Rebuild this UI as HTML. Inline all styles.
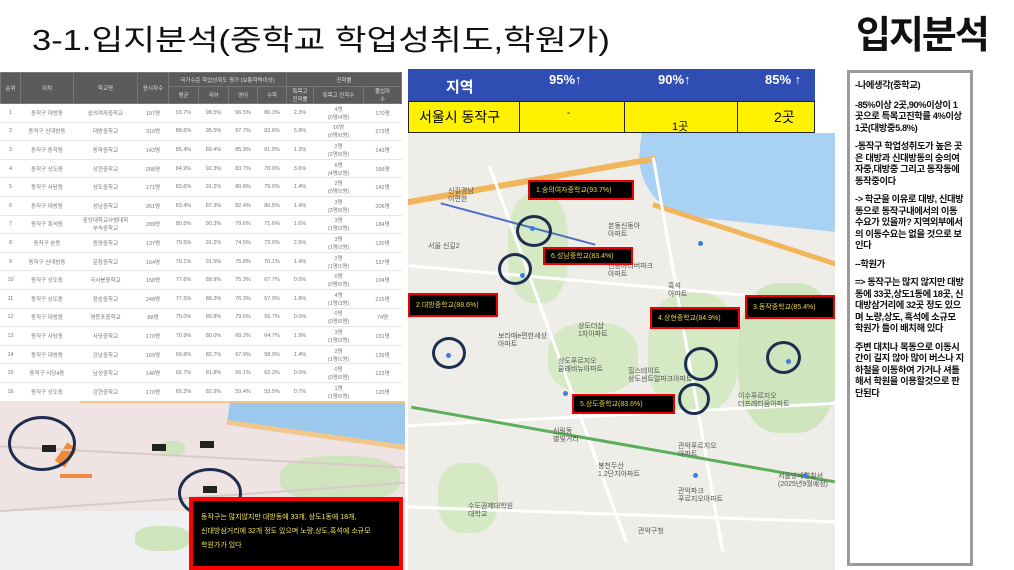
<!DOCTYPE html>
<html><head><meta charset="utf-8"><style>
*{margin:0;padding:0;box-sizing:border-box}
body{width:1014px;height:570px;background:#fff;position:relative;overflow:hidden;font-family:"Liberation Sans","Noto Sans CJK KR",sans-serif}
.abs{position:absolute}
table.t{position:absolute;left:0;top:72px;width:401px;border-collapse:collapse;font-size:5.5px;color:#777;text-align:center;table-layout:fixed}
table.t td{height:18.6px;border-bottom:1px solid #e6e6e6;white-space:nowrap;overflow:hidden}
table.t th{background:#5b5b5b;color:#ddd;font-weight:normal;border:1px solid #777;font-size:5.5px}
.lbl{position:absolute;background:#000;border:2px solid #e00;color:#e8d44a;font-size:7px;padding-left:6px;display:flex;align-items:center}
.cir{position:absolute;border:3px solid #1d2e4f;border-radius:50%}
.g{position:absolute;background:#cfe3bd;border-radius:40%}
.pin{position:absolute;width:5px;height:5px;border-radius:50%;background:#3b7de0}
.m{position:absolute;font-size:7px;color:#555;line-height:8px}
.rd{position:absolute;background:#fff;height:3px}
</style></head><body>
<div class="abs" style="left:32px;top:17px;font-size:29px;color:#111;transform:scaleX(1.19);transform-origin:left top;white-space:nowrap">3-1.입지분석(중학교 학업성취도,학원가)</div>
<div class="abs" style="left:856px;top:4px;font-size:38px;font-weight:bold;color:#111;letter-spacing:-2px">입지분석</div>

<table class="t">
<colgroup><col style="width:20px"><col style="width:53px"><col style="width:64px"><col style="width:31px"><col style="width:30px"><col style="width:30px"><col style="width:29px"><col style="width:29px"><col style="width:27px"><col style="width:50px"><col style="width:38px"></colgroup>
<tr style="height:14px"><th rowspan="2">순위</th><th rowspan="2">위치</th><th rowspan="2">학교명</th><th rowspan="2">응시자수</th><th colspan="4">국가수준 학업성취도 평가 (보통학력이상)</th><th colspan="3">진학률</th></tr>
<tr style="height:15px"><th>평균</th><th>국어</th><th>영어</th><th>수학</th><th>특목고<br>진학률</th><th>특목고 진학수</th><th>졸업자<br>수</th></tr>
<tr><td>1</td><td>동작구 대방동</td><td>숭의여자중학교</td><td>197명</td><td>93.7%</td><td>98.5%</td><td>96.5%</td><td>86.3%</td><td>2.3%</td><td>4명<br>(0명/4명)</td><td>170명</td></tr>
<tr><td>2</td><td>동작구 신대방동</td><td>대방중학교</td><td>310명</td><td>88.6%</td><td>95.5%</td><td>87.7%</td><td>82.6%</td><td>5.8%</td><td>16명<br>(0명/0명)</td><td>273명</td></tr>
<tr><td>3</td><td>동작구 동작동</td><td>동작중학교</td><td>142명</td><td>85.4%</td><td>89.4%</td><td>85.9%</td><td>81.0%</td><td>1.3%</td><td>2명<br>(2명/0명)</td><td>143명</td></tr>
<tr><td>4</td><td>동작구 상도동</td><td>상현중학교</td><td>208명</td><td>84.9%</td><td>92.3%</td><td>83.7%</td><td>78.9%</td><td>3.6%</td><td>6명<br>(4명/2명)</td><td>166명</td></tr>
<tr><td>5</td><td>동작구 사당동</td><td>상도중학교</td><td>171명</td><td>83.6%</td><td>91.2%</td><td>80.8%</td><td>79.0%</td><td>1.4%</td><td>2명<br>(0명/2명)</td><td>142명</td></tr>
<tr><td>6</td><td>동작구 대방동</td><td>성남중학교</td><td>261명</td><td>83.4%</td><td>87.3%</td><td>82.4%</td><td>80.5%</td><td>1.4%</td><td>3명<br>(3명/0명)</td><td>206명</td></tr>
<tr><td>7</td><td>동작구 흑석동</td><td>중앙대학교사범대학<br>부속중학교</td><td>289명</td><td>80.5%</td><td>90.3%</td><td>79.6%</td><td>71.6%</td><td>1.6%</td><td>3명<br>(1명/2명)</td><td>184명</td></tr>
<tr><td>8</td><td>동작구 본동</td><td>동양중학교</td><td>137명</td><td>79.5%</td><td>91.2%</td><td>74.5%</td><td>73.0%</td><td>2.5%</td><td>3명<br>(1명/2명)</td><td>120명</td></tr>
<tr><td>9</td><td>동작구 신대방동</td><td>문창중학교</td><td>164명</td><td>79.1%</td><td>91.5%</td><td>75.8%</td><td>70.1%</td><td>1.4%</td><td>2명<br>(1명/1명)</td><td>137명</td></tr>
<tr><td>10</td><td>동작구 상도동</td><td>국사봉중학교</td><td>158명</td><td>77.6%</td><td>89.9%</td><td>75.3%</td><td>67.7%</td><td>0.0%</td><td>0명<br>(0명/0명)</td><td>104명</td></tr>
<tr><td>11</td><td>동작구 상도동</td><td>장승중학교</td><td>248명</td><td>77.5%</td><td>88.3%</td><td>76.3%</td><td>67.9%</td><td>1.8%</td><td>4명<br>(1명/3명)</td><td>215명</td></tr>
<tr><td>12</td><td>동작구 대방동</td><td>영등포중학교</td><td>88명</td><td>75.0%</td><td>89.8%</td><td>79.6%</td><td>55.7%</td><td>0.0%</td><td>0명<br>(0명/0명)</td><td>74명</td></tr>
<tr><td>13</td><td>동작구 사당동</td><td>사당중학교</td><td>170명</td><td>70.9%</td><td>80.0%</td><td>68.2%</td><td>64.7%</td><td>1.9%</td><td>3명<br>(1명/2명)</td><td>151명</td></tr>
<tr><td>14</td><td>동작구 대방동</td><td>강남중학교</td><td>169명</td><td>69.8%</td><td>82.7%</td><td>67.9%</td><td>58.9%</td><td>1.4%</td><td>2명<br>(1명/1명)</td><td>139명</td></tr>
<tr><td>15</td><td>동작구 사당4동</td><td>남성중학교</td><td>140명</td><td>66.7%</td><td>81.8%</td><td>56.1%</td><td>62.2%</td><td>0.0%</td><td>0명<br>(0명/0명)</td><td>123명</td></tr>
<tr><td>16</td><td>동작구 상도동</td><td>강현중학교</td><td>170명</td><td>65.2%</td><td>82.9%</td><td>59.4%</td><td>53.5%</td><td>0.7%</td><td>1명<br>(1명/0명)</td><td>120명</td></tr>
</table>

<!-- bottom-left map -->
<div class="abs" style="left:0;top:401px;width:405px;height:169px;background:#efe3e3;overflow:hidden">
 <div class="abs" style="left:0;top:110px;width:190px;height:60px;background:#eef0f2"></div>
 <div class="abs" style="left:230px;top:-22px;width:200px;height:60px;background:#9cc8ee;transform:rotate(8deg);border-bottom:5px solid #f1c88b"></div>
 <div class="abs" style="left:80px;top:-2px;width:330px;height:4px;background:#f1c88b"></div>
 <div class="g" style="left:280px;top:55px;width:120px;height:45px"></div>
 <div class="g" style="left:135px;top:125px;width:55px;height:25px"></div>
 <div class="g" style="left:160px;top:40px;width:25px;height:15px"></div>
 <div class="abs" style="left:55px;top:48px;width:22px;height:12px;background:#f08a3a;transform:rotate(-55deg)"></div>
 <div class="abs" style="left:60px;top:73px;width:32px;height:4px;background:#f08a3a"></div>
 <div class="abs" style="left:0;top:95px;width:405px;height:2px;background:#d9c9c9;transform:rotate(-4deg)"></div>
 <div class="abs" style="left:0;top:55px;width:405px;height:2px;background:#d9c9c9;transform:rotate(3deg)"></div>
 <div class="abs" style="left:42px;top:44px;width:14px;height:7px;background:#222"></div>
 <div class="abs" style="left:152px;top:43px;width:14px;height:7px;background:#222"></div>
 <div class="abs" style="left:200px;top:40px;width:14px;height:7px;background:#222"></div>
 <div class="abs" style="left:203px;top:85px;width:14px;height:7px;background:#222"></div>
 <div class="cir" style="left:8px;top:15px;width:68px;height:55px"></div>
 <div class="cir" style="left:178px;top:67px;width:64px;height:50px"></div>
</div>
<div class="abs" style="left:189px;top:497px;width:214px;height:73px;border:4px solid #f00;background:#000;color:#f3e85a;font-size:7px;line-height:14px;padding:10px 0 0 8px">동작구는 많지않지만 대방동에 33개, 상도1동에 18개,<br>신대방삼거리에 32개 정도 있으며 노량,상도,흑석에 소규모<br>학원가가 있다</div>

<!-- top table blue/yellow -->
<div class="abs" style="left:408px;top:69px;width:407px;height:32px;background:#2f4db3;color:#fff;font-weight:bold">
 <span class="abs" style="left:38px;top:7px;font-size:15px">지역</span>
 <span class="abs" style="left:141px;top:3px;font-size:13px">95%↑</span>
 <span class="abs" style="left:250px;top:3px;font-size:13px">90%↑</span>
 <span class="abs" style="left:357px;top:3px;font-size:13px">85% ↑</span>
</div>
<div class="abs" style="left:408px;top:101px;width:407px;height:32px;background:#fff200;border:1px solid #222">
 <div class="abs" style="left:0;top:0;width:111px;height:30px;border-right:1px solid #222;font-size:14px;padding:5px 0 0 10px">서울시 동작구</div>
 <div class="abs" style="left:215px;top:0;width:1px;height:30px;background:#222"></div>
 <div class="abs" style="left:328px;top:0;width:1px;height:30px;background:#222"></div>
 <span class="abs" style="left:158px;top:6px;font-size:10px">-</span>
 <span class="abs" style="left:263px;top:16px;font-size:11px">1곳</span>
 <span class="abs" style="left:365px;top:5px;font-size:14px">2곳</span>
</div>

<!-- main map -->
<div class="abs" style="left:408px;top:133px;width:427px;height:437px;background:#efede8;overflow:hidden">
 <div class="abs" style="left:230px;top:-10px;width:230px;height:100px;background:#a9d1f3;border-radius:0 0 0 60px;transform:rotate(6deg)"></div>
 <div class="abs" style="left:-10px;top:45px;width:260px;height:6px;background:#f1b55c;transform:rotate(-10deg)"></div>
 <div class="abs" style="left:240px;top:100px;width:200px;height:5px;background:#f1b55c;transform:rotate(18deg)"></div>
 <div class="g" style="left:100px;top:60px;width:60px;height:110px;background:#d6e9c5"></div>
 <div class="g" style="left:330px;top:150px;width:100px;height:150px;background:#cfe5bd"></div>
 <div class="g" style="left:240px;top:160px;width:90px;height:120px;background:#d6e9c5"></div>
 <div class="g" style="left:140px;top:190px;width:90px;height:70px;background:#d6e9c5"></div>
 <div class="g" style="left:30px;top:330px;width:60px;height:70px;background:#d6e9c5"></div>
 <div class="rd" style="left:0;top:150px;width:430px;transform:rotate(5deg)"></div>
 <div class="rd" style="left:0;top:280px;width:430px;transform:rotate(-3deg)"></div>
 <div class="rd" style="left:0;top:380px;width:430px;transform:rotate(2deg)"></div>
 <div class="rd" style="left:-50px;top:220px;width:400px;transform:rotate(70deg)"></div>
 <div class="rd" style="left:80px;top:220px;width:400px;transform:rotate(80deg)"></div>
 <div class="abs" style="left:0;top:310px;width:430px;height:3px;background:#5cae5c;transform:rotate(10deg)"></div>
 <div class="abs" style="left:30px;top:90px;width:160px;height:2px;background:#4f6fbf;transform:rotate(15deg)"></div>
 <div class="m" style="left:40px;top:55px">신길경남<br>이편한</div>
 <div class="m" style="left:20px;top:110px">서울 신길2</div>
 <div class="m" style="left:200px;top:90px">본동신동아<br>아파트</div>
 <div class="m" style="left:200px;top:130px">신동아리버파크<br>아파트</div>
 <div class="m" style="left:260px;top:150px">흑석<br>아파트</div>
 <div class="m" style="left:170px;top:190px">상도더샵<br>1차아파트</div>
 <div class="m" style="left:90px;top:200px">보라매e편한세상<br>아파트</div>
 <div class="m" style="left:150px;top:225px">상도푸르지오<br>클래비뉴아파트</div>
 <div class="m" style="left:220px;top:235px">힐스테이트<br>상도센트럴파크아파트</div>
 <div class="m" style="left:330px;top:260px">이수푸르지오<br>더프레티움아파트</div>
 <div class="m" style="left:145px;top:295px">신림동<br>별빛거리</div>
 <div class="m" style="left:270px;top:310px">관악푸르지오<br>아파트</div>
 <div class="m" style="left:190px;top:330px">봉천두산<br>1,2단지아파트</div>
 <div class="m" style="left:60px;top:370px">수도권제대학원<br>대학교</div>
 <div class="m" style="left:270px;top:355px">관악파크<br>푸르지오아파트</div>
 <div class="m" style="left:370px;top:340px">서울방배경찰서<br>(2025년9월예정)</div>
 <div class="m" style="left:230px;top:395px">관악구청</div>
 <div class="pin" style="left:122px;top:93px"></div><div class="pin" style="left:112px;top:140px"></div>
 <div class="pin" style="left:38px;top:220px"></div><div class="pin" style="left:155px;top:258px"></div>
 <div class="pin" style="left:290px;top:108px"></div><div class="pin" style="left:378px;top:226px"></div>
 <div class="pin" style="left:395px;top:340px"></div><div class="pin" style="left:285px;top:340px"></div>
 <div class="cir" style="left:108px;top:82px;width:36px;height:32px"></div>
 <div class="cir" style="left:90px;top:120px;width:34px;height:32px"></div>
 <div class="cir" style="left:24px;top:204px;width:34px;height:32px"></div>
 <div class="cir" style="left:276px;top:214px;width:34px;height:34px"></div>
 <div class="cir" style="left:270px;top:250px;width:32px;height:32px"></div>
 <div class="cir" style="left:358px;top:208px;width:35px;height:33px"></div>
</div>
<div class="lbl" style="left:528px;top:180px;width:106px;height:20px">1.숭의여자중학교(93.7%)</div>
<div class="lbl" style="left:543px;top:247px;width:90px;height:18px">6.성남중학교(83.4%)</div>
<div class="lbl" style="left:408px;top:293px;width:90px;height:24px">2.대방중학교(88.6%)</div>
<div class="lbl" style="left:745px;top:295px;width:90px;height:24px">3.동작중학교(85.4%)</div>
<div class="lbl" style="left:650px;top:307px;width:90px;height:22px">4.상현중학교(84.9%)</div>
<div class="lbl" style="left:572px;top:394px;width:103px;height:20px">5.상도중학교(83.6%)</div>

<!-- right panel -->
<div class="abs" style="left:847px;top:70px;width:126px;height:496px;border:3px solid #9b9b9b;background:#fff;font-size:9.3px;font-weight:bold;color:#111;line-height:11.5px;padding:7px 5px 0 5px;letter-spacing:-0.4px">
<p style="margin-bottom:8px">-나에생각(중학교)</p>
<p style="margin-bottom:7px">-85%이상 2곳,90%이상이 1곳으로 특목고진학률 4%이상 1곳(대방중5.8%)</p>
<p style="margin-bottom:7px">-동작구 학업성취도가 높은 곳은 대방과 신대방동의 숭의여자중,대방중 그리고 동작동에 동작중이다</p>
<p style="margin-bottom:7px">-&gt; 학군을 이유로 대방, 신대방동으로 동작구내에서의 이동수요가 있을까? 지역외부에서의 이동수요는 없을 것으로 보인다</p>
<p style="margin-bottom:7px">--학원가</p>
<p style="margin-bottom:7px">=&gt; 동작구는 많지 않지만 대방동에 33곳,상도1동에 18곳, 신대방삼거리에 32곳 정도 있으며 노량,상도, 흑석에 소규모 학원가 들이 배치해 있다</p>
<p>주변 대치나 목동으로 이동시간이 길지 않아 많이 버스나 지하철을 이동하여 가거나 셔틀해서 학원을 이용할것으로 판단된다</p>
</div>
</body></html>
